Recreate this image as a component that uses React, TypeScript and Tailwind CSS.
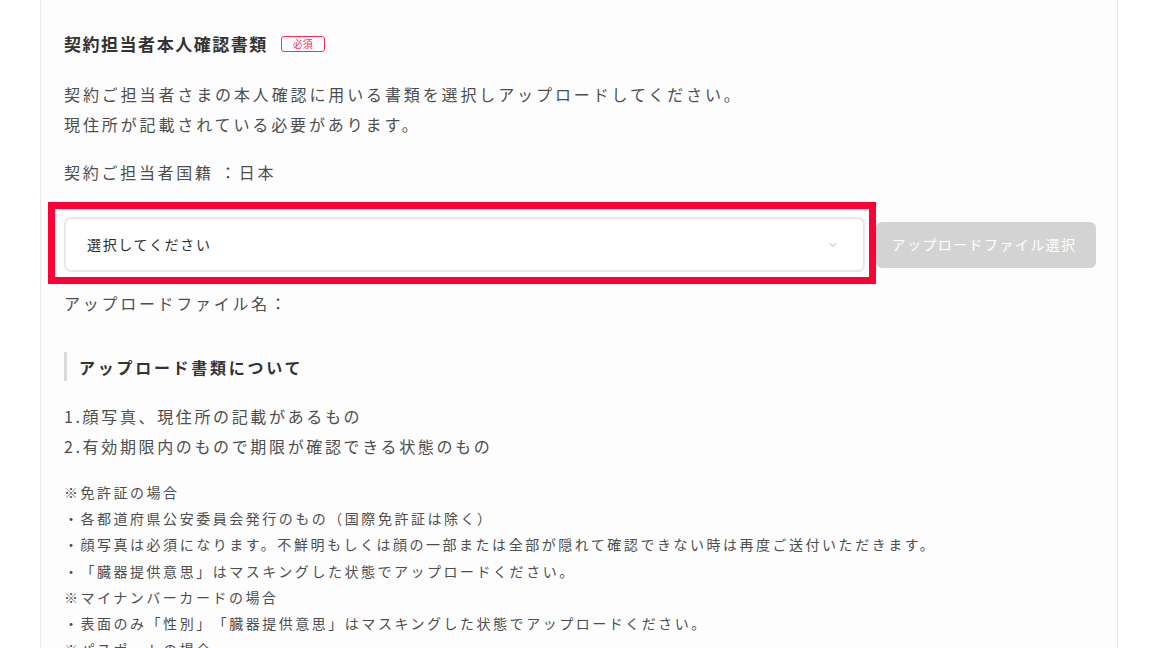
import { ChevronDown } from 'lucide-react';

const smallLines = [
  '※免許証の場合',
  '・各都道府県公安委員会発行のもの（国際免許証は除く）',
  '・顔写真は必須になります。不鮮明もしくは顔の一部または全部が隠れて確認できない時は再度ご送付いただきます。',
  '・「臓器提供意思」はマスキングした状態でアップロードください。',
  '※マイナンバーカードの場合',
  '・表面のみ「性別」「臓器提供意思」はマスキングした状態でアップロードください。',
  '※パスポートの場合',
  '・顔写真のページと所持人記入欄のページをアップロードください。',
];

const App = () => {
  return (
    <div className="min-h-screen bg-white font-['Noto_Sans_CJK_JP','Noto_Sans',sans-serif] [text-spacing-trim:space-all]">
      <div className="ml-[40px] w-[1078px] min-h-screen border-x border-[#e8e8e8] bg-[#fdfdfd] pl-[23px] pr-[21px] pt-[32px] pb-10">
        {/* タイトル */}
        <div className="flex h-[24px] items-center">
          <h2 className="text-[17px] font-bold tracking-[0.09em] text-[#333]">契約担当者本人確認書類</h2>
          <span className="ml-[13px] flex h-[16px] w-[44px] items-center justify-center rounded-[3px] border border-[#ff2d55] text-[10px] leading-none text-[#ff2d55]">
            必須
          </span>
        </div>

        <p className="mt-[23px] text-[16px] leading-[30px] tracking-[0.18em] text-[#4d4d4d]">
          契約ご担当者さまの本人確認に用いる書類を選択しアップロードしてください。
          <br />
          現住所が記載されている必要があります。
        </p>

        <p className="mt-[18px] text-[16px] leading-[30px] tracking-[0.17em] text-[#4d4d4d]">契約ご担当者国籍 ：日本</p>

        {/* 書類選択 */}
        <div className="mt-[30px] flex items-center gap-[11px]">
          <div className="relative flex-1">
            <div className="flex h-[55px] items-center justify-between rounded-[7px] border-2 border-[#e8e8e8] bg-white pl-[21px] pr-[24px]">
              <span className="text-[14px] tracking-[0.12em] text-[#2b2b2b]">選択してください</span>
              <ChevronDown size={12} strokeWidth={1.75} className="text-[#999]" />
            </div>
            <div className="pointer-events-none absolute -top-[15px] -bottom-[12px] -left-[16px] -right-[11px] border-[7px] border-[#ff0036]" />
          </div>
          <button className="h-[46px] w-[220px] rounded-[6px] bg-[#d3d3d3] pr-[4px] text-[14px] tracking-[0.1em] text-white">
            アップロードファイル選択
          </button>
        </div>

        <p className="mt-[16px] text-[16px] leading-[30px] tracking-[0.17em] text-[#4d4d4d]">アップロードファイル名：</p>

        {/* アップロード書類について */}
        <div className="mt-[34px] flex h-[29px] items-center border-l-[3px] border-[#d9d9d9] pl-[12px]">
          <h3 className="text-[16px] font-bold tracking-[0.17em] text-[#333]">アップロード書類について</h3>
        </div>

        <div className="mt-[20px] text-[16px] leading-[30px] tracking-[0.165em] text-[#4d4d4d]">
          <p>1.顔写真、現住所の記載があるもの</p>
          <p>2.有効期限内のもので期限が確認できる状態のもの</p>
        </div>

        <div className="mt-[18px] text-[14px] leading-[26.2px] tracking-[0.18em] text-[#4d4d4d]">
          {smallLines.map((line) => (
            <p key={line}>{line}</p>
          ))}
        </div>
      </div>
    </div>
  );
};

export default App;
